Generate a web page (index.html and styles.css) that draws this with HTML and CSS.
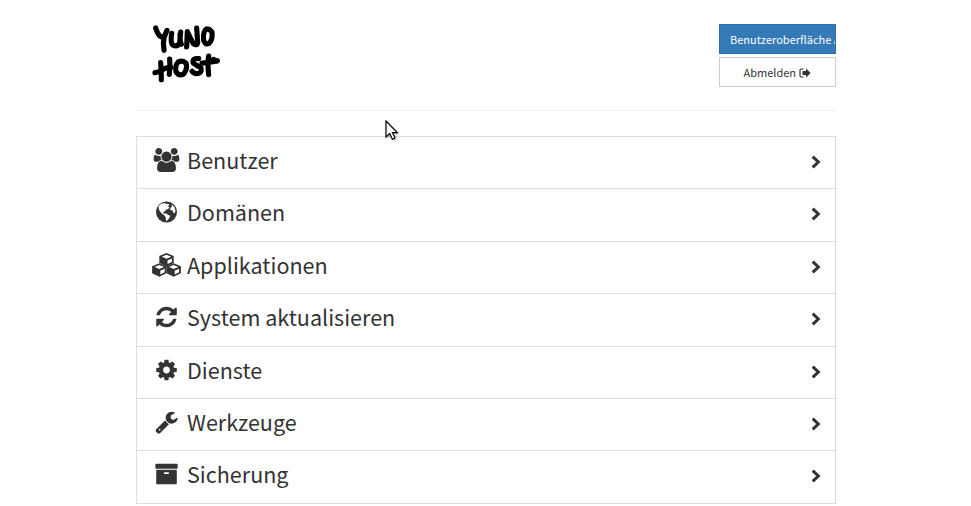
FILE: index.html
```html
<!DOCTYPE html>
<html lang="de">
<head>
<meta charset="utf-8">
<title>YunoHost</title>
<link rel="stylesheet" href="styles.css">
</head>
<body>
<div class="container">
  <header class="header">
    <svg class="logo" viewBox="48 42 206 178" role="img" aria-label="YunoHost">
      <path d="M59 54Q63 68 71 78Q79 84 86 78L93 61M85 77Q80 99 84 121"/>
      <path d="M107 70Q103 98 110 105Q124 112 131 99L134 66M132 72Q132 96 136 103"/>
      <path d="M154 65L152 111M155 67Q162 83 172 101Q183 109 185 98L182 54"/>
      <path d="M211 57Q200 65 203 91Q208 105 218 101Q231 90 228 67Q221 54 210 58"/>
      <path d="M74 158Q76 184 76 209M101 147Q103 168 100 193M57 188Q68 188 78 180T105 173"/>
      <path d="M128 156Q117 161 120 185Q129 200 143 192Q156 175 150 160Q141 150 127 156"/>
      <path d="M188 146Q170 143 171 158Q182 167 195 173Q199 190 182 191Q173 191 168 184"/>
      <path d="M218 138Q214 160 218 194M198 159Q218 159 244 152M232 148L243 153"/>
    </svg>
    <div class="actions">
      <a class="btn primary">Benutzeroberfläche Aufrufen</a>
      <a class="btn">Abmelden <svg class="logout" viewBox="0 0 12 10"><path d="M4.5 1H2.2Q1 1 1 2.2V7.8Q1 9 2.2 9H4.5" fill="none" stroke="#333" stroke-width="1.2"/><path d="M3.5 3H7V.4L11.7 5 7 9.6V7H3.5Z"/></svg></a>
    </div>
  </header>
  <nav class="list">
    <a class="item"><svg class="icon" viewBox="-192 0 2304 1792"><path d="M593 896q-162 5-265 128h-134q-82 0-138-40.5t-56-118.5q0-353 124-353 6 0 43.5 21t97.5 42.5 119 21.5q67 0 133-23-5 37-5 66 0 139 81 256zm1071 637q0 120-73 189.5t-194 69.5h-874q-121 0-194-69.5t-73-189.5q0-53 3.5-103.5t14-109 26.5-108.500 43-97.500 62-81 85.500-53.500 111.500-20q10 0 43 21.500t73 48 107 48 135 21.500 135-21.500 107-48 73-48 43-21.500q61 0 111.500 20t85.500 53.500 62 81 43 97.500 26.500 108.500 14 109 3.500 103.500zm-1024-1277q0 106-75 181t-181 75-181-75-75-181 75-181 181-75 181 75 75 181zm704 384q0 159-112.500 271.500t-271.500 112.500-271.500-112.500-112.500-271.500 112.500-271.500 271.500-112.500 271.500 112.500 112.500 271.500zm576 225q0 78-56 118.500t-138 40.500h-134q-103-123-265-128 81-117 81-256 0-29-5-66 66 23 133 23 59 0 119-21.500t97.500-42.500 43.500-21q124 0 124 353zm-128-609q0 106-75 181t-181 75-181-75-75-181 75-181 181-75 181 75 75 181z"/></svg><span class="label">Benutzer</span><svg class="chevron" viewBox="0 0 10 14"><path d="M1.7 1.7L7.3 7L1.7 12.3"/></svg></a>
    <a class="item"><svg class="icon" viewBox="0 0 31 24"><circle cx="15.500" cy="12" r="10.500"/><path fill="#fff" d="M8 5.6L10.3 3.7 14 3 15.3 4.2 17 3.6 18.3 5 16.8 6.4 18.5 7 17 9.3 15.2 9.6 13.8 11.6 11.8 12.2 13.2 13.8 15.2 13.2 16.5 14.6 19.2 15.8 18.3 18.2 15.8 20.7 14.9 20.8 14.8 17.5 13.5 15.4 10.5 13.2 8.4 10.5 7.3 7.4ZM20.5 4L23.5 7.2 24.5 10.2 23.7 13.3 22.2 12.8 21.7 10.6 19.2 10.1 19.4 7.8 21 6.8Z"/></svg><span class="label">Domänen</span><svg class="chevron" viewBox="0 0 10 14"><path d="M1.7 1.7L7.3 7L1.7 12.3"/></svg></a>
    <a class="item"><svg class="icon" viewBox="0 0 31 24"><g id="cube"><path d="M15.5 0L22.700 2.900V10L15.500 13.400 8.300 10V2.900Z"/><path fill="#fff" d="M15.5 1.8L20.2 3.700 15.500 5.700 10.800 3.700ZM16.500 7.400L20.900 5.500V8.900L16.500 11.100Z"/></g><use href="#cube" x="-7.200" y="10.300"/><use href="#cube" x="7.200" y="10.300"/></svg><span class="label">Applikationen</span><svg class="chevron" viewBox="0 0 10 14"><path d="M1.7 1.7L7.3 7L1.7 12.3"/></svg></a>
    <a class="item"><svg class="icon" viewBox="-256 0 2304 1792"><path d="M1639 1056q0 5-1 7-64 268-268 434.5t-478 166.5q-146 0-282.5-55t-243.5-157l-129 129q-19 19-45 19t-45-19-19-45v-448q0-26 19-45t45-19h448q26 0 45 19t19 45-19 45l-137 137q71 66 161 102t187 36q134 0 250-65t186-179q11-17 53-117 8-23 30-23h192q13 0 22.5 9.5t9.5 22.5zm25-800v448q0 26-19 45t-45 19h-448q-26 0-45-19t-19-45 19-45l138-138q-148-137-349-137-134 0-250 65t-186 179q-11 17-53 117-8 23-30 23h-199q-13 0-22.5-9.5t-9.5-22.5v-7q65-268 270-434.5t480-166.5q146 0 284 55.5t245 156.5l130-129q19-19 45-19t45 19 19 45z"/></svg><span class="label">System aktualisieren</span><svg class="chevron" viewBox="0 0 10 14"><path d="M1.7 1.7L7.3 7L1.7 12.3"/></svg></a>
    <a class="item"><svg class="icon" viewBox="-256 0 2304 1792"><path d="M1152 896q0-106-75-181t-181-75-181 75-75 181 75 181 181 75 181-75 75-181zm512-109v222q0 12-8 23t-20 13l-185 28q-19 54-39 91 35 50 107 138 10 12 10 25t-9 23q-27 37-99 108t-94 71q-12 0-26-9l-138-108q-44 23-91 38-16 136-29 186-7 28-36 28h-222q-14 0-24.500-8.500t-11.500-21.500l-28-184q-49-16-90-37l-141 107q-10 9-25 9-14 0-25-11-126-114-165-168-7-10-7-23 0-12 8-23 15-21 51-66.500t54-70.500q-27-50-41-99l-183-27q-13-2-21-12.500t-8-23.500v-222q0-12 8-23t19-13l186-28q14-46 39-92-40-57-107-138-10-12-10-24 0-10 9-23 26-36 98.500-107.500t94.500-71.500q13 0 26 10l138 107q44-23 91-38 16-136 29-186 7-28 36-28h222q14 0 24.500 8.500t11.500 21.500l28 184q49 16 90 37l142-107q9-9 24-9 13 0 25 10 129 119 165 170 7 8 7 22 0 12-8 23-15 21-51 66.500t-54 70.500q26 50 41 98l183 28q13 2 21 12.500t8 23.500z"/></svg><span class="label">Dienste</span><svg class="chevron" viewBox="0 0 10 14"><path d="M1.7 1.7L7.3 7L1.7 12.3"/></svg></a>
    <a class="item"><svg class="icon" viewBox="-256 0 2304 1792"><path d="M448 1472q0-26-19-45t-45-19-45 19-19 45 19 45 45 19 45-19 19-45zm644-420l-682 682q-37 37-90 37-52 0-91-37l-106-108q-38-36-38-90 0-53 38-91l681-681q39 98 114.500 173.500t173.500 114.500zm634-435q0 39-23 106-47 134-164.500 217.500t-258.500 83.500q-185 0-316.500-131.500t-131.500-316.500 131.500-316.500 316.500-131.500q58 0 121.500 16.500t107.500 46.500q16 11 16 28t-16 28l-293 169v224l193 107q5-3 79-48.500t135.500-81 70.500-35.500q15 0 23.500 10t8.500 25z"/></svg><span class="label">Werkzeuge</span><svg class="chevron" viewBox="0 0 10 14"><path d="M1.7 1.7L7.3 7L1.7 12.3"/></svg></a>
    <a class="item"><svg class="icon" viewBox="-256 0 2304 1792"><path d="M1088 832q0-26-19-45t-45-19h-256q-26 0-45 19t-19 45 19 45 45 19h256q26 0 45-19t19-45zm576-192v960q0 26-19 45t-45 19h-1408q-26 0-45-19t-19-45v-960q0-26 19-45t45-19h1408q26 0 45 19t19 45zm64-448v256q0 26-19 45t-45 19h-1536q-26 0-45-19t-19-45v-256q0-26 19-45t45-19h1536q26 0 45 19t19 45z"/></svg><span class="label">Sicherung</span><svg class="chevron" viewBox="0 0 10 14"><path d="M1.7 1.7L7.3 7L1.7 12.3"/></svg></a>
  </nav>
</div>
<svg class="cursor" viewBox="0 0 14 21"><path d="M1 1V17L4.700 13.600 7.400 19.300 10 18 7.500 12.700H12.300Z"/></svg>
</body>
</html>
```
FILE: styles.css
```css
* { box-sizing: border-box; }
body {
  margin: 0;
  background: #fff;
  color: #333;
  font-family: "Noto Sans CJK SC", "Open Sans", sans-serif;
  overflow: hidden;
}
.container { width: 700px; margin-left: 136px; }
.header {
  display: flex;
  justify-content: space-between;
  align-items: flex-start;
  height: 111px;
  padding: 24px 0 0 16px;
  border-bottom: 1px solid #eee;
}
.logo { width: 68.67px; height: 59.33px; fill: none; stroke: #000; stroke-width: 15.5; stroke-linecap: round; stroke-linejoin: round; }
.actions { display: flex; flex-direction: column; gap: 3px; width: 117px; }
.btn {
  height: 30px;
  padding: 0 10px;
  border: 1px solid #ccc;
  font-size: 11px;
  line-height: 28px;
  text-align: center;
  white-space: nowrap;
  overflow: hidden;
}
.primary { background: #337ab7; border-color: #2e6da4; color: #fff; text-align: left; }
.logout { width: 12px; height: 10px; margin-left: 1px; vertical-align: -1px; fill: #333; }
.list { margin-top: 25px; border: 1px solid #ddd; border-top: 0; }
.item { display: flex; align-items: flex-start; height: 52.4px; padding: 0 14px; border-top: 1px solid #ddd; }
.icon { width: 31px; height: 24px; margin-top: 11px; flex: none; fill: #333; }
.label { margin-left: 5px; font-size: 21.55px; line-height: 45px; white-space: nowrap; flex: 1; }
.chevron { width: 10px; height: 14px; margin-top: 18px; flex: none; fill: none; stroke: #333; stroke-width: 3; }
.cursor { position: absolute; left: 385px; top: 120px; width: 14px; height: 21px; fill: #fff; stroke: #000; stroke-width: 1.2; filter: drop-shadow(1px 1px 1px rgba(0,0,0,.3)); }
```
